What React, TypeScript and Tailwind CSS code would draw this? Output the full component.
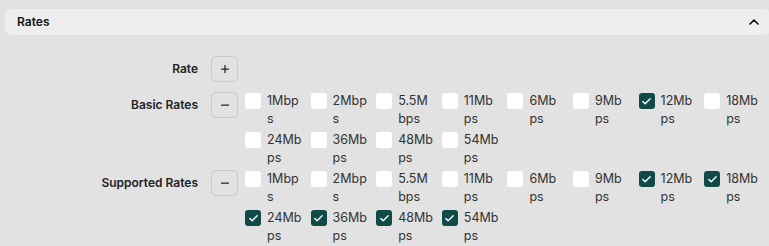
import { ChevronUp, Plus, Minus, Check } from 'lucide-react';

// wrapped the way the narrow label column breaks them
const allRates: { id: string; lines: [string, string] }[] = [
  { id: '1Mbps', lines: ['1Mbp', 's'] },
  { id: '2Mbps', lines: ['2Mbp', 's'] },
  { id: '5.5Mbps', lines: ['5.5M', 'bps'] },
  { id: '11Mbps', lines: ['11Mb', 'ps'] },
  { id: '6Mbps', lines: ['6Mb', 'ps'] },
  { id: '9Mbps', lines: ['9Mb', 'ps'] },
  { id: '12Mbps', lines: ['12Mb', 'ps'] },
  { id: '18Mbps', lines: ['18Mb', 'ps'] },
  { id: '24Mbps', lines: ['24Mb', 'ps'] },
  { id: '36Mbps', lines: ['36Mb', 'ps'] },
  { id: '48Mbps', lines: ['48Mb', 'ps'] },
  { id: '54Mbps', lines: ['54Mb', 'ps'] },
];

const basicChecked = ['12Mbps'];
const supportedChecked = ['12Mbps', '18Mbps', '24Mbps', '36Mbps', '48Mbps', '54Mbps'];

const RateBox = ({ lines, checked }: { lines: [string, string]; checked: boolean }) => (
  <label className="flex items-start gap-[6px]">
    <span
      className={`mt-px flex h-4 w-4 shrink-0 items-center justify-center rounded-[3px] ${
        checked ? 'bg-[#0f4a46]' : 'bg-white'
      }`}
    >
      {checked && <Check size={11} strokeWidth={3} className="text-white" />}
    </span>
    <span className="whitespace-nowrap text-[12.5px] leading-[17.5px] text-[#333]">
      {lines[0]}
      <br />
      {lines[1]}
    </span>
  </label>
);

const RateRow = ({ title, checked, icon }: { title: string; checked: string[]; icon: 'plus' | 'minus' }) => (
  <div className="flex items-start">
    <div className="flex h-[26px] w-[193px] items-center justify-end text-[12px] font-semibold text-[#222]">{title}</div>
    <button className="ml-[13px] flex h-[26px] w-[27px] shrink-0 items-center justify-center rounded-[5px] border border-[#c9cac9] text-[#222]">
      {icon === 'plus' ? <Plus size={12} strokeWidth={2.5} /> : <Minus size={12} strokeWidth={2.5} />}
    </button>
    {icon === 'minus' && (
      <div className="ml-[7px] grid grid-cols-[repeat(8,65.6px)] gap-y-1">
        {allRates.map((r) => (
          <RateBox key={r.id} lines={r.lines} checked={checked.includes(r.id)} />
        ))}
      </div>
    )}
  </div>
);

export default function App() {
  return (
    <div className="flex min-h-screen bg-[#e1e2e1]" style={{ fontFamily: 'Inter, "Noto Sans", sans-serif' }}>
      <div className="flex-1 pl-[5px] pr-[8px] pt-[9px]">
        <div className="flex h-[26px] items-center justify-between rounded-[6px] bg-[#eeeeee] pl-3 pr-2">
          <span className="text-[12px] font-semibold text-[#111]">Rates</span>
          <ChevronUp size={16} strokeWidth={2.5} className="text-[#111]" />
        </div>
        <div className="mt-[21px] flex flex-col">
          <RateRow title="Rate" checked={[]} icon="plus" />
          <div className="mt-[10px]">
            <RateRow title="Basic Rates" checked={basicChecked} icon="minus" />
          </div>
          <div className="mt-1">
            <RateRow title="Supported Rates" checked={supportedChecked} icon="minus" />
          </div>
        </div>
      </div>
      <div className="w-1 bg-[#e9e9e9]" />
    </div>
  );
}
